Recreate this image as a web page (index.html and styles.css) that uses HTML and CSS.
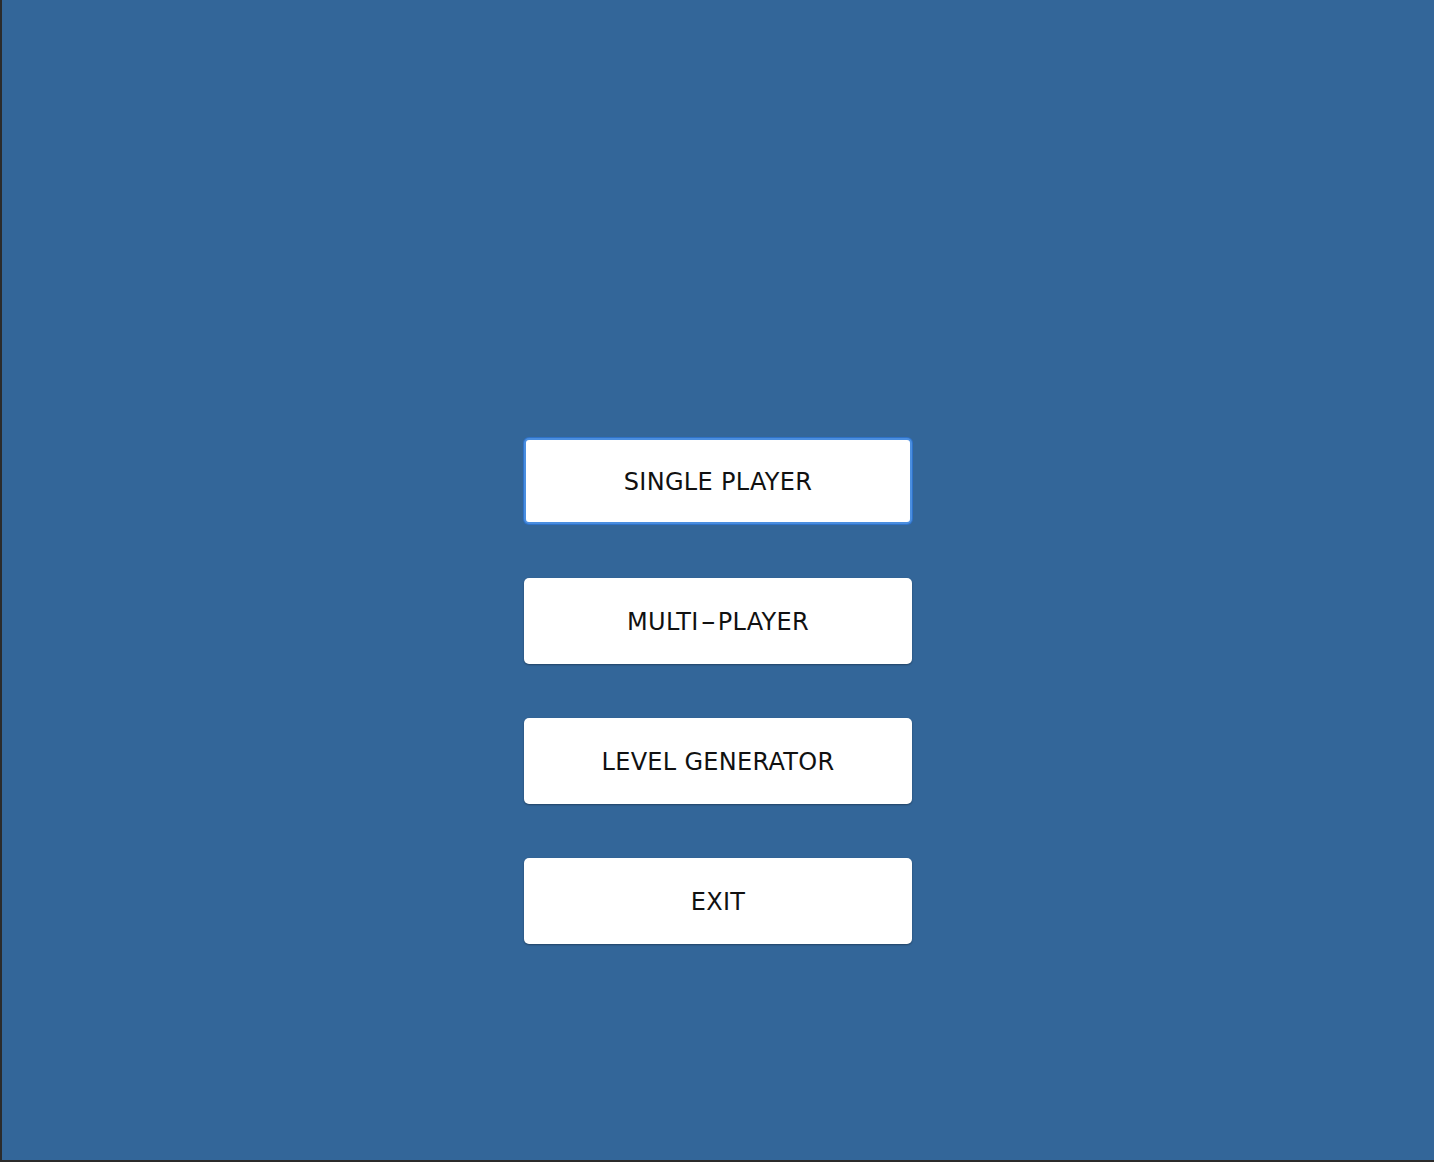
FILE: index.html
```html
<!DOCTYPE html>
<html>
<head>
<meta charset="utf-8">
<link rel="stylesheet" href="styles.css">
</head>
<body>
<div class="screen">
  <div class="menu">
    <button class="btn focused">SINGLE PLAYER</button>
    <button class="btn">MULTI<span class="dash">-</span>PLAYER</button>
    <button class="btn">LEVEL GENERATOR</button>
    <button class="btn">EXIT</button>
  </div>
</div>
</body>
</html>
```
FILE: styles.css
```css
html, body {
  margin: 0;
  padding: 0;
  background: #2b2b2b;
}
.screen {
  width: 1432px;
  height: 1160px;
  margin-left: 2px;
  background: #336699;
  box-sizing: border-box;
  padding-top: 438px;
  display: flex;
  justify-content: center;
}
.menu {
  display: flex;
  flex-direction: column;
  gap: 54px;
}
.btn {
  width: 388px;
  height: 86px;
  background: #ffffff;
  border: none;
  border-radius: 5px;
  box-shadow: 0 1px 2px rgba(0,0,0,0.35);
  font-family: "DejaVu Sans", "Noto Sans", sans-serif;
  font-size: 24px;
  letter-spacing: 0.3px;
  color: #111;
  padding: 2px 0 0 0;
  cursor: pointer;
}
.dash {
  display: inline-block;
  transform: scaleX(1.8);
  margin: 0 5px;
}
.btn.focused {
  border: 2px solid #4a8ee0;
  box-shadow: 0 0 0 1px #2f72c8;
}
```
